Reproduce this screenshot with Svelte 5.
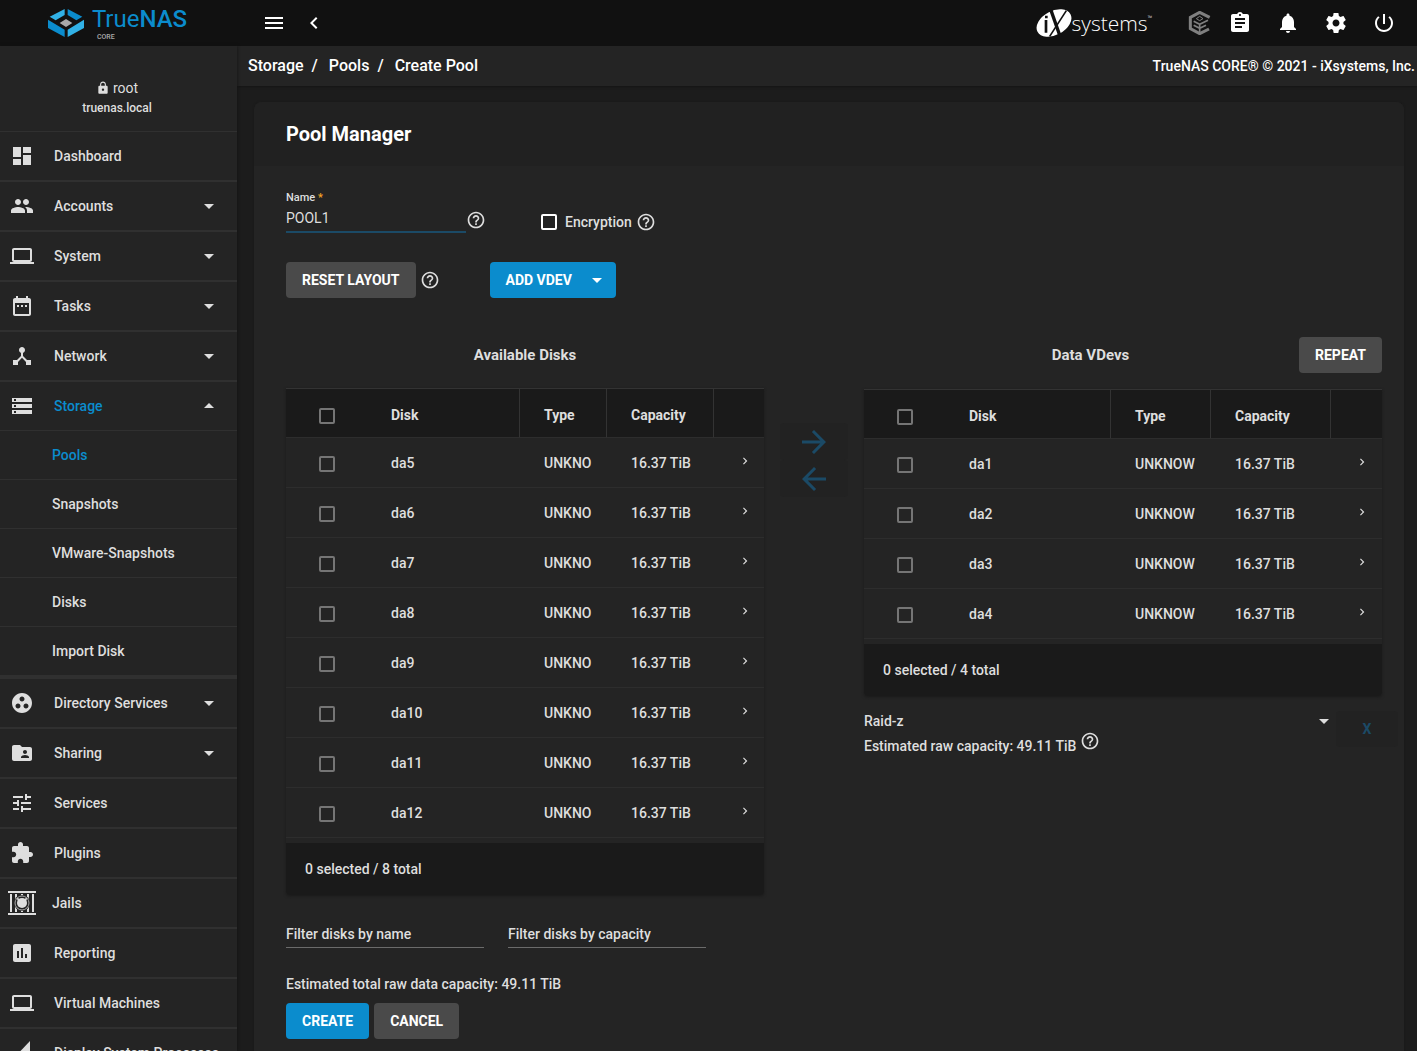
<script>
  const icons = {
    dashboard: 'M3 13h8V3H3v10zm0 8h8v-6H3v6zm10 0h8V11h-8v10zm0-18v6h8V3h-8z',
    group: 'M16 11c1.66 0 2.99-1.34 2.99-3S17.66 5 16 5c-1.66 0-3 1.34-3 3s1.34 3 3 3zm-8 0c1.66 0 2.99-1.34 2.99-3S9.66 5 8 5C6.34 5 5 6.34 5 8s1.34 3 3 3zm0 2c-2.33 0-7 1.17-7 3.5V19h14v-2.5c0-2.33-4.67-3.5-7-3.5zm8 0c-.29 0-.62.02-.97.05 1.16.84 1.97 1.97 1.97 3.45V19h6v-2.5c0-2.33-4.67-3.5-7-3.5z',
    laptop: 'M20 18c1.1 0 1.99-.9 1.99-2L22 6c0-1.1-.9-2-2-2H4c-1.1 0-2 .9-2 2v10c0 1.1.9 2 2 2H0v2h24v-2h-4zM4 6h16v10H4V6z',
    date: 'M9 11H7v2h2v-2zm4 0h-2v2h2v-2zm4 0h-2v2h2v-2zm2-7h-1V2h-2v2H8V2H6v2H5c-1.11 0-1.99.9-1.99 2L3 20c0 1.1.89 2 2 2h14c1.1 0 2-.9 2-2V6c0-1.1-.9-2-2-2zm0 16H5V9h14v11z',
    hub: 'M17 16l-4-4V8.82C14.16 8.4 15 7.3 15 6c0-1.66-1.34-3-3-3S9 4.34 9 6c0 1.3.84 2.4 2 2.82V12l-4 4H3v5h5v-3.05l4-4.2 4 4.2V21h5v-5h-4z',
    storage: 'M2 20h20v-4H2v4zm2-3h2v2H4v-2zM2 4v4h20V4H2zm4 3H4V5h2v2zm-4 7h20v-4H2v4zm2-3h2v2H4v-2z',
    groupWork: 'M12 2C6.48 2 2 6.48 2 12s4.48 10 10 10 10-4.48 10-10S17.52 2 12 2zM8 17.5c-1.38 0-2.5-1.12-2.5-2.5s1.12-2.5 2.5-2.5 2.5 1.12 2.5 2.5-1.12 2.5-2.5 2.5zM9.5 8c0-1.38 1.12-2.5 2.5-2.5s2.5 1.12 2.5 2.5-1.12 2.5-2.5 2.5S9.5 9.38 9.5 8zm6.5 9.5c-1.38 0-2.5-1.12-2.5-2.5s1.12-2.5 2.5-2.5 2.5 1.12 2.5 2.5-1.12 2.5-2.5 2.5z',
    folder: 'M20 6h-8l-2-2H4c-1.1 0-1.99.9-1.99 2L2 18c0 1.1.9 2 2 2h16c1.1 0 2-.9 2-2V8c0-1.1-.9-2-2-2zm-5 3c1.1 0 2 .9 2 2s-.9 2-2 2-2-.9-2-2 .9-2 2-2zm4 8h-8v-1c0-1.33 2.67-2 4-2s4 .67 4 2v1z',
    tune: 'M3 17v2h6v-2H3zM3 5v2h10V5H3zm10 16v-2h8v-2h-8v-2h-2v6h2zM7 9v2H3v2h4v2h2V9H7zm14 4v-2H11v2h10zm-6-4h2V7h4V5h-4V3h-2v6z',
    extension: 'M20.5 11H19V7c0-1.1-.9-2-2-2h-4V3.5C13 2.12 11.88 1 10.5 1S8 2.12 8 3.5V5H4c-1.1 0-1.99.9-1.99 2v3.8H3.5c1.49 0 2.7 1.21 2.7 2.7s-1.21 2.7-2.7 2.7H2V20c0 1.1.9 2 2 2h3.8v-1.5c0-1.49 1.21-2.7 2.7-2.7 1.49 0 2.7 1.21 2.7 2.7V22H17c1.1 0 2-.9 2-2v-4h1.5c1.38 0 2.5-1.12 2.5-2.5S21.88 11 20.5 11z',
    assessment: 'M19 3H5c-1.1 0-2 .9-2 2v14c0 1.1.9 2 2 2h14c1.1 0 2-.9 2-2V5c0-1.1-.9-2-2-2zM9 17H7v-7h2v7zm4 0h-2V7h2v10zm4 0h-2v-4h2v4z',
    processes: 'M20 0v24H2v-5z',
    help: 'M11 18h2v-2h-2v2zm1-16C6.48 2 2 6.48 2 12s4.48 10 10 10 10-4.48 10-10S17.52 2 12 2zm0 18c-4.41 0-8-3.59-8-8s3.59-8 8-8 8 3.59 8 8-3.59 8-8 8zm0-14c-2.21 0-4 1.79-4 4h2c0-1.1.9-2 2-2s2 .9 2 2c0 2-3 1.75-3 5h2c0-2.25 3-2.5 3-5 0-2.21-1.79-4-4-4z',
    menu: 'M3 18h18v-2H3v2zm0-5h18v-2H3v2zm0-7v2h18V6H3z',
    chevronLeft: 'M15.41 7.41L14 6l-6 6 6 6 1.41-1.41L10.83 12z',
    chevronRight: 'M10 6L8.59 7.41 13.17 12l-4.58 4.59L10 18l6-6z',
    bell: 'M12 22c1.1 0 2-.9 2-2h-4c0 1.1.89 2 2 2zm6-6v-5c0-3.07-1.64-5.64-4.5-6.32V4c0-.83-.67-1.5-1.5-1.5s-1.5.67-1.5 1.5v.68C7.63 5.36 6 7.92 6 11v5l-2 2v1h16v-1l-2-2z',
    assignment: 'M19 3h-4.18C14.4 1.84 13.3 1 12 1c-1.3 0-2.4.84-2.82 2H5c-1.1 0-2 .9-2 2v14c0 1.1.9 2 2 2h14c1.1 0 2-.9 2-2V5c0-1.1-.9-2-2-2zm-7 0c.55 0 1 .45 1 1s-.45 1-1 1-1-.45-1-1 .45-1 1-1zm2 14H7v-2h7v2zm3-4H7v-2h10v2zm0-4H7V7h10v2z',
    settings: 'M19.43 12.98c.04-.32.07-.64.07-.98s-.03-.66-.07-.98l2.11-1.65c.19-.15.24-.42.12-.64l-2-3.46c-.12-.22-.39-.3-.61-.22l-2.49 1c-.52-.4-1.08-.73-1.69-.98l-.38-2.65C14.46 2.18 14.25 2 14 2h-4c-.25 0-.46.18-.49.42l-.38 2.65c-.61.25-1.17.59-1.69.98l-2.49-1c-.23-.09-.49 0-.61.22l-2 3.46c-.13.22-.07.49.12.64l2.11 1.65c-.04.32-.07.65-.07.98s.03.66.07.98l-2.11 1.65c-.19.15-.24.42-.12.64l2 3.46c.12.22.39.3.61.22l2.49-1c.52.4 1.08.73 1.69.98l.38 2.65c.03.24.24.42.49.42h4c.25 0 .46-.18.49-.42l.38-2.65c.61-.25 1.17-.59 1.69-.98l2.49 1c.23.09.49 0 .61-.22l2-3.46c.12-.22.07-.49-.12-.64l-2.11-1.65zM12 15.5c-1.93 0-3.5-1.57-3.5-3.5s1.57-3.5 3.5-3.5 3.5 1.57 3.5 3.5-1.57 3.5-3.5 3.5z',
    power: 'M13 3h-2v10h2V3zm4.83 2.17l-1.42 1.42C17.99 7.86 19 9.81 19 12c0 3.87-3.13 7-7 7s-7-3.13-7-7c0-2.19 1.01-4.14 2.58-5.42L6.17 5.17C4.23 6.82 3 9.26 3 12c0 4.97 4.03 9 9 9s9-4.03 9-9c0-2.74-1.23-5.18-3.17-6.83z',
    lock: 'M18 8h-1V6c0-2.76-2.24-5-5-5S7 3.24 7 6v2H6c-1.1 0-2 .9-2 2v10c0 1.1.9 2 2 2h12c1.1 0 2-.9 2-2V10c0-1.1-.9-2-2-2zm-6 9c-1.1 0-2-.9-2-2s.9-2 2-2 2 .9 2 2-.9 2-2 2zm3.1-9H8.9V6c0-1.71 1.39-3.1 3.1-3.1 1.71 0 3.1 1.39 3.1 3.1v2z',
    down: 'M7 10l5 5 5-5z',
    up: 'M7 14l5-5 5 5z',
    forward: 'M12 4l-1.41 1.41L16.17 11H4v2h12.17l-5.58 5.59L12 20l8-8z',
    back: 'M20 11H7.83l5.59-5.59L12 4l-8 8 8 8 1.41-1.41L7.83 13H20v-2z'
  }

  const nav = [
    { name: 'Dashboard', icon: 'dashboard' },
    { name: 'Accounts', icon: 'group', sub: true },
    { name: 'System', icon: 'laptop', sub: true },
    { name: 'Tasks', icon: 'date', sub: true },
    { name: 'Network', icon: 'hub', sub: true },
    { name: 'Storage', icon: 'storage', sub: true, open: ['Pools', 'Snapshots', 'VMware-Snapshots', 'Disks', 'Import Disk'] },
    { name: 'Directory Services', icon: 'groupWork', sub: true },
    { name: 'Sharing', icon: 'folder', sub: true },
    { name: 'Services', icon: 'tune' },
    { name: 'Plugins', icon: 'extension' },
    { name: 'Jails', icon: 'jail' },
    { name: 'Reporting', icon: 'assessment' },
    { name: 'Virtual Machines', icon: 'laptop' },
    { name: 'Display System Processes', icon: 'processes' }
  ]

  const available = ['da5', 'da6', 'da7', 'da8', 'da9', 'da10', 'da11', 'da12']
  const vdev = ['da1', 'da2', 'da3', 'da4']

  let poolName = $state('POOL1')
  let encryption = $state(false)
  let layout = $state('Raid-z')
</script>

{#snippet icon(name, size)}
  <svg width={size} height={size} viewBox="0 0 24 24" aria-hidden="true"><path d={icons[name]} /></svg>
{/snippet}

{#snippet disks(rows, type, kind)}
  <div class="datatable">
    <table class={kind}>
      <thead>
        <tr>
          <th class="check"><input type="checkbox" aria-label="Select all disks" /></th>
          <th>Disk</th>
          <th class="type">Type</th>
          <th class="capacity">Capacity</th>
          <th class="more"></th>
        </tr>
      </thead>
      <tbody>
        {#each rows as disk}
          <tr>
            <td class="check"><input type="checkbox" aria-label={disk} /></td>
            <td>{disk}</td>
            <td>{type}</td>
            <td>16.37 TiB</td>
            <td class="more"><button aria-label="Expand {disk}">{@render icon('chevronRight', 14)}</button></td>
          </tr>
        {/each}
      </tbody>
    </table>
    <div class="total">0 selected / {rows.length} total</div>
  </div>
{/snippet}

<div class="app">
  <header class="topbar">
    <a class="brand" href="#dashboard">
      <svg width="36" height="28" viewBox="144 24 108 84" aria-hidden="true">
        <path fill="#31b1e6" d="M149 47 194 24V42L167 58zM252 56 203 86V108L252 81z" />
        <path fill="#0b8ccd" d="M203 24 247 47 229 58 203 42zM144 56 194 86V108L144 81z" />
        <path fill="#aaa" d="M179 66 198 54 217 66 198 78z" />
      </svg>
      <span class="wordmark">
        <span class="truenas">True<b>NAS</b></span>
        <span class="core">CORE</span>
      </span>
    </a>
    <div class="toggles">
      <button aria-label="Toggle menu">{@render icon('menu', 24)}</button>
      <button aria-label="Collapse menu">{@render icon('chevronLeft', 24)}</button>
    </div>
    <div class="actions">
      <a class="ix" href="#ixsystems">
        <svg width="36" height="28" viewBox="108 25 108 84" aria-hidden="true">
          <ellipse cx="162" cy="67" rx="56" ry="36" transform="rotate(-28 162 67)" fill="#fff" />
          <path d="M152 26 182 112" stroke="#111" stroke-width="10" />
          <path d="M199 30 149 107" stroke="#111" stroke-width="5" />
          <path d="M134 58h8v38h-8zM135 45h8v8h-8z" fill="#111" />
        </svg>
        <span>systems</span><small>™</small>
      </a>
      <a class="command" href="#truecommand" aria-label="TrueCommand">
        <svg width="24" height="24" viewBox="564 33 72 72" aria-hidden="true" fill="none" stroke="#808080">
          <path d="M629 52 599 37 571 52V86L599 101 627 87" stroke-width="9" />
          <path d="M581 64 599 73 624 61M581 76 599 85 618 76M599 70V97" stroke-width="5" />
          <path d="M599 49 609 56 599 62 589 56z" stroke-width="3" />
        </svg>
      </a>
      <button aria-label="Tasks">{@render icon('assignment', 24)}</button>
      <button aria-label="Alerts">{@render icon('bell', 24)}</button>
      <button aria-label="Settings">{@render icon('settings', 24)}</button>
      <button aria-label="Power">{@render icon('power', 24)}</button>
    </div>
  </header>

  <div class="below">
    <nav>
      <div class="user">
        <div class="name">{@render icon('lock', 14)} root</div>
        <div class="host">truenas.local</div>
      </div>
      <ul class="menu">
        {#each nav as item}
          <li>
            <a class:open={item.open} href="#{item.name}">
              {#if item.icon === 'jail'}
                <svg class="jail" width="28" height="24" viewBox="0 0 28 24" aria-hidden="true">
                  <path d="M0 0h28v2H0zM0 22h28v2H0zM2 3h2v18H2zM7 3h2v18H7zM13 3h2v18h-2zM19 3h2v18h-2zM24 3h2v18h-2z" />
                  <circle cx="14" cy="12" r="8" fill="#242424" />
                  <circle cx="14" cy="12" r="7" fill="none" stroke="#aaa" stroke-width="1" />
                  <circle cx="14" cy="12" r="5" />
                  <path d="M9 7c2 0 3 1 4 2l-2 2c-1-1-2-2-2-4zM19 7c-2 0-3 1-4 2l2 2c1-1 2-2 2-4z" />
                </svg>
              {:else}
                {@render icon(item.icon, 24)}
              {/if}
              <span>{item.name}</span>
              {#if item.sub}
                {@render icon(item.open ? 'up' : 'down', 24)}
              {/if}
            </a>
            {#if item.open}
              <ul class="submenu">
                {#each item.open as child, i}
                  <li><a class:active={i === 0} href="#{child}">{child}</a></li>
                {/each}
              </ul>
            {/if}
          </li>
        {/each}
      </ul>
    </nav>

    <main>
      <div class="breadcrumb">
        <div class="crumbs">
          <a href="#storage">Storage</a><span>/</span>
          <a href="#pools">Pools</a><span>/</span>
          <a href="#create">Create Pool</a>
        </div>
        <div class="copyright">TrueNAS CORE® © 2021 - iXsystems, Inc.</div>
      </div>

      <section class="card">
        <h1>Pool Manager</h1>
        <div class="body">
          <div class="row fields">
            <div class="field">
              <label for="pool-name">Name <em>*</em></label>
              <input id="pool-name" type="text" bind:value={poolName} />
            </div>
            <span class="help">{@render icon('help', 20)}</span>
            <div class="encryption">
              <input id="encryption" type="checkbox" bind:checked={encryption} />
              <label for="encryption">Encryption</label>
              <span class="help">{@render icon('help', 20)}</span>
            </div>
          </div>

          <div class="row controls">
            <button class="btn">Reset Layout</button>
            <span class="help">{@render icon('help', 20)}</span>
            <button class="btn primary add">Add Vdev {@render icon('down', 24)}</button>
          </div>

          <div class="layout">
            <div class="panel">
              <div class="head"><h2>Available Disks</h2></div>
              {@render disks(available, 'UNKNO', 'narrow')}
              <div class="filters">
                <input type="text" placeholder="Filter disks by name" aria-label="Filter disks by name" />
                <input type="text" placeholder="Filter disks by capacity" aria-label="Filter disks by capacity" />
              </div>
            </div>

            <div class="move">
              <button disabled aria-label="Add to vdev">{@render icon('forward', 36)}</button>
              <button disabled aria-label="Remove from vdev">{@render icon('back', 36)}</button>
            </div>

            <div class="panel">
              <div class="head">
                <h2>Data VDevs</h2>
                <button class="btn">Repeat</button>
              </div>
              {@render disks(vdev, 'UNKNOW', 'wide')}
              <div class="raid">
                <div class="raid-info">
                  <div class="select">
                    <select bind:value={layout} aria-label="Vdev layout">
                      <option>Raid-z</option>
                      <option>Mirror</option>
                      <option>Stripe</option>
                    </select>
                    {@render icon('down', 24)}
                  </div>
                  <div class="estimate">
                    Estimated raw capacity: 49.11 TiB
                    <span class="help">{@render icon('help', 20)}</span>
                  </div>
                </div>
                <button class="remove" disabled>X</button>
              </div>
            </div>
          </div>

          <p class="summary">Estimated total raw data capacity: 49.11 TiB</p>
          <div class="submit">
            <button class="btn primary">Create</button>
            <button class="btn">Cancel</button>
          </div>
        </div>
      </section>
    </main>
  </div>
</div>

<style>
  :global(body) {
    background: #1c1c1c;
  }

  .app {
    display: flex;
    flex-direction: column;
    height: 100vh;
    overflow: hidden;
    font: 500 14px/20px Roboto, sans-serif;
    color: #dedede;
  }

  .app :global(*) {
    box-sizing: border-box;
  }

  svg {
    display: block;
    flex: none;
    fill: currentColor;
  }

  a {
    color: inherit;
    text-decoration: none;
  }

  button,
  input,
  select {
    font: inherit;
    color: inherit;
    margin: 0;
    padding: 0;
    border: 0;
    background: none;
    outline: none;
  }

  h1,
  h2,
  p,
  ul {
    margin: 0;
    padding: 0;
    list-style: none;
  }

  .topbar {
    display: flex;
    flex: none;
    align-items: center;
    height: 46px;
    background: #111;
    color: #fff;
  }

  .brand {
    display: flex;
    align-items: center;
    justify-content: center;
    gap: 8px;
    width: 235px;
  }

  .wordmark {
    display: flex;
    flex-direction: column;
    color: #0b8ccd;
  }

  .truenas {
    font-size: 24px;
    line-height: 28px;
    font-weight: 400;
  }

  .truenas b {
    font-weight: 500;
  }

  .core {
    padding-left: 5px;
    font-size: 7px;
    line-height: 8px;
    color: #aaa;
  }

  .toggles {
    display: flex;
    padding-left: 19px;
  }

  .toggles button {
    padding: 8px;
  }

  .actions {
    display: flex;
    align-items: center;
    margin-left: auto;
    padding-right: 9px;
  }

  .actions button {
    padding: 12px;
  }

  .ix {
    display: flex;
    align-items: center;
    font: 300 21px/28px "Open Sans", sans-serif;
  }

  .ix small {
    align-self: flex-start;
    font-size: 6px;
    line-height: 18px;
  }

  .command {
    margin: 0 4px 0 36px;
  }

  .command svg {
    fill: none;
  }

  .below {
    display: flex;
    flex: 1;
    min-height: 0;
  }

  nav {
    flex: none;
    width: 237px;
    overflow: hidden;
    background: #242424;
    box-shadow: 0 0 3px #111;
    z-index: 1;
  }

  .user {
    height: 85px;
    padding: 32px 3px 0 0;
    text-align: center;
  }

  .name {
    display: flex;
    align-items: center;
    justify-content: center;
    gap: 3px;
    font-weight: 400;
  }

  .host {
    font-size: 12px;
  }

  .menu > li {
    border: solid #303030;
    border-width: 1px 0;
  }

  .menu > li > a {
    display: flex;
    align-items: center;
    height: 48px;
    padding: 0 16px 0 10px;
  }

  .menu > li > a span {
    flex: 1;
    padding-left: 20px;
    white-space: nowrap;
  }

  .menu .jail {
    margin: 0 -4px 0 -2px;
  }

  .open span,
  .submenu .active {
    color: #0b8ccd;
  }

  .submenu {
    border: solid #303030;
    border-width: 1px 0;
  }

  .submenu a {
    display: block;
    padding: 14px 0 14px 52px;
    border-bottom: 1px solid #303030;
  }

  main {
    flex: 1;
    min-width: 0;
    overflow: hidden;
  }

  .breadcrumb {
    display: flex;
    align-items: center;
    justify-content: space-between;
    height: 40px;
    padding: 0 2px 0 11px;
    background: #242424;
    box-shadow: 0 1px 2px #151515;
    color: #fff;
  }

  .crumbs {
    display: flex;
    font-size: 16px;
  }

  .crumbs span {
    padding: 0 11px 0 8px;
  }

  .card {
    margin: 16px 13px 16px 17px;
    border-radius: 8px;
    background: #242424;
    box-shadow: 0 0 2px #181818;
  }

  h1 {
    padding: 20px 32px;
    border-radius: 8px 8px 0 0;
    background: #212121;
    font-size: 20px;
    line-height: 24px;
    font-weight: 700;
    color: #fff;
  }

  .body {
    padding: 25px 22px 32px 32px;
  }

  .row {
    display: flex;
  }

  .fields {
    align-items: flex-end;
  }

  .field {
    display: flex;
    flex-direction: column;
    width: 180px;
  }

  .field label {
    font-size: 11px;
    line-height: 14px;
  }

  em {
    font-style: normal;
    color: #f5a623;
  }

  .field input {
    height: 28px;
    border-bottom: 2px solid #1b4a66;
    font-weight: 400;
  }

  .fields .help {
    padding-bottom: 3px;
  }

  .encryption {
    display: flex;
    align-items: center;
    margin: 0 0 1px 55px;
  }

  .encryption label {
    padding: 0 4px 0 8px;
  }

  .encryption .help {
    padding: 0;
  }

  input[type="checkbox"] {
    appearance: none;
    display: block;
    width: 16px;
    height: 16px;
    border: 2px solid #757575;
    border-radius: 2px;
  }

  .encryption input[type="checkbox"] {
    border-color: #fff;
  }

  .controls {
    align-items: center;
    gap: 4px;
    margin-top: 29px;
  }

  .btn {
    height: 36px;
    padding: 0 16px;
    border-radius: 4px;
    background: #4a4a4a;
    color: #fff;
    font-weight: 700;
    text-transform: uppercase;
  }

  .primary {
    background: #0b8ccd;
  }

  .add {
    display: flex;
    align-items: center;
    gap: 13px;
    margin-left: 46px;
    padding-right: 7px;
  }

  .layout {
    display: grid;
    grid-template-columns: 478fr 100px 518fr;
    margin-top: 39px;
  }

  .head {
    display: flex;
    align-items: center;
    min-height: 35px;
    margin-bottom: 16px;
  }

  h2 {
    flex: 1;
    font-size: 15px;
    line-height: 20px;
    font-weight: 700;
    text-align: center;
  }

  .head .btn {
    margin-left: -18px;
  }

  .datatable {
    border-radius: 0 0 4px 4px;
    box-shadow: 0 1px 3px #1a1a1a;
  }

  table {
    width: 100%;
    table-layout: fixed;
    border-spacing: 0;
  }

  th,
  td {
    height: 50px;
    padding: 0 0 0 24px;
    border-bottom: 1px solid #2d2d2d;
    text-align: left;
  }

  th {
    padding-top: 4px;
    border-top: 1px solid #333;
    border-right: 1px solid #333;
    background: #1a1a1a;
    font-weight: 700;
  }

  th.check,
  th.more {
    border-right: 0;
  }

  .check {
    width: 81px;
    padding-left: 33px;
  }

  .check input {
    margin-top: 2px;
  }

  .more {
    width: 50px;
  }

  .narrow .type {
    width: 87px;
  }

  .narrow .capacity {
    width: 107px;
  }

  .wide .type {
    width: 100px;
  }

  .wide .capacity {
    width: 120px;
  }

  .wide .more {
    width: 51px;
  }

  .total {
    margin-top: 5px;
    padding: 16px 19px;
    border-radius: 0 0 4px 4px;
    background: #1a1a1a;
  }

  .filters {
    display: flex;
    gap: 24px;
    margin-top: 25px;
  }

  .filters input {
    width: 198px;
    height: 28px;
    border-bottom: 1px solid #6b6b6b;
  }

  .filters input::placeholder {
    color: #dedede;
  }

  .move {
    display: flex;
    flex-direction: column;
    align-items: center;
    padding-top: 86px;
  }

  .move button {
    height: 37px;
    padding: 0 16px;
    border-radius: 4px;
    background: #222;
    color: #1b4a66;
  }

  .raid {
    display: flex;
    align-items: flex-start;
    margin: 15px -16px 0 0;
  }

  .raid-info {
    flex: 1;
  }

  .select {
    display: grid;
    grid-template-rows: 20px;
    align-items: center;
  }

  .select select {
    grid-area: 1 / 1;
    appearance: none;
    height: 20px;
  }

  .select svg {
    grid-area: 1 / 1;
    justify-self: end;
    pointer-events: none;
  }

  .estimate {
    display: flex;
    align-items: flex-end;
    gap: 4px;
  }

  .estimate .help {
    padding-bottom: 5px;
  }

  .remove {
    width: 62px;
    height: 36px;
    border-radius: 4px;
    background: #222;
    color: #1b4a66;
    font-weight: 700;
  }

  .summary {
    margin-top: 26px;
  }

  .submit {
    display: flex;
    gap: 5px;
    margin-top: 9px;
  }
</style>
